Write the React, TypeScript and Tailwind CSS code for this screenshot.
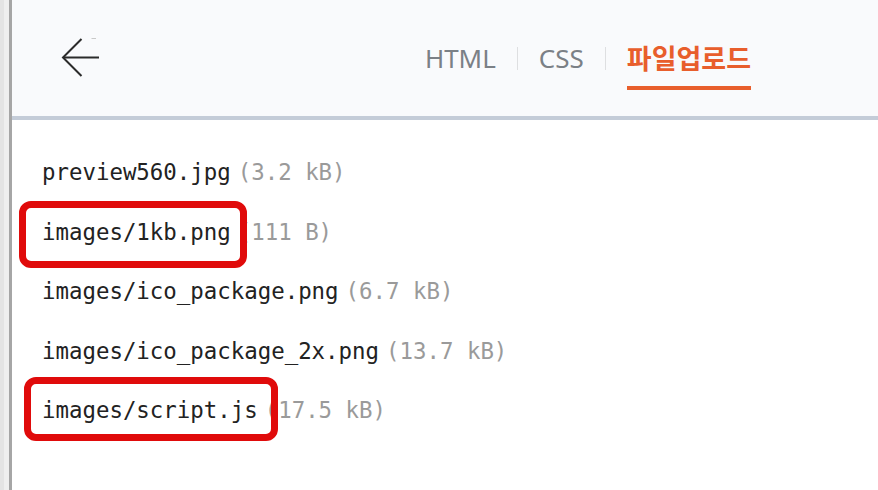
import React from "react";

const files = [
  { name: "preview560.jpg", size: "(3.2 kB)" },
  { name: "images/1kb.png", size: "(111 B)", mark: "w-[228px] h-[67px] -top-[2px] left-[7px]" },
  { name: "images/ico_package.png", size: "(6.7 kB)" },
  { name: "images/ico_package_2x.png", size: "(13.7 kB)" },
  { name: "images/script.js", size: "(17.5 kB)", mark: "w-[254px] h-[64px] -top-[4px] left-[12px]" },
];

const tabs = ["HTML", "CSS", "파일업로드"];

export default function App() {
  return (
    <div className="flex h-[490px] w-[878px] overflow-hidden bg-white">
      {/* left edge of the parent window */}
      <div className="flex h-full w-[12px] shrink-0">
        <div className="w-[4px] bg-[#e4e4e4]" />
        <div className="w-[5px] bg-[#efefef]" />
        <div className="w-[3px] bg-[#a6a6a6]" />
      </div>

      <div className="flex flex-1 flex-col">
        {/* Header */}
        <div className="flex h-[120px] shrink-0 items-center justify-between border-b-4 border-[#c4ccd8] bg-[#f9fafc] pl-[49px] pr-[127px]">
          <button className="relative h-[40px] w-[40px]">
            <svg width="40" height="40" viewBox="0 0 40 40" fill="none">
              <path d="M2 19.5H38" stroke="#2b2b2b" strokeWidth="2.2" />
              <path d="M20.5 1L2 19.5L20.5 38" stroke="#2b2b2b" strokeWidth="2" strokeLinejoin="miter" />
              <path d="M30.5 0.5H35" stroke="#c9c9c9" strokeWidth="1" />
            </svg>
          </button>

          <nav className="flex items-center gap-[21px] font-['Noto_Sans','Noto_Sans_CJK_KR',sans-serif] text-[26px] leading-[32px]">
            {tabs.map((t, i) => (
              <React.Fragment key={t}>
                {i > 0 && <span className="h-[23px] w-px bg-[#dedfe1]" />}
                <span
                  className={
                    i === 2
                      ? "border-b-4 border-[#e85e2c] pb-[12px] pt-[16px] font-['Noto_Sans_CJK_KR',sans-serif] text-[27px] font-bold text-[#e85e2c]"
                      : "border-b-4 border-transparent pb-[12px] pt-[16px] text-[#7b8086]"
                  }
                >
                  {t}
                </span>
              </React.Fragment>
            ))}
          </nav>
        </div>

        {/* File list */}
        <div className="flex flex-col pt-[23px] font-['DejaVu_Sans_Mono',monospace] text-[22.4px]">
          {files.map((f) => (
            <div key={f.name} className="relative flex h-[59.6px] items-center pl-[30px]">
              <span className="text-[#222222]">{f.name}</span>
              <span className="ml-[7px] text-[#9a9a9a]">{f.size}</span>
              {f.mark && (
                <span className={`absolute rounded-[12px] border-[7px] border-[#e00b0b] ${f.mark}`} />
              )}
            </div>
          ))}
        </div>
      </div>
    </div>
  );
}
